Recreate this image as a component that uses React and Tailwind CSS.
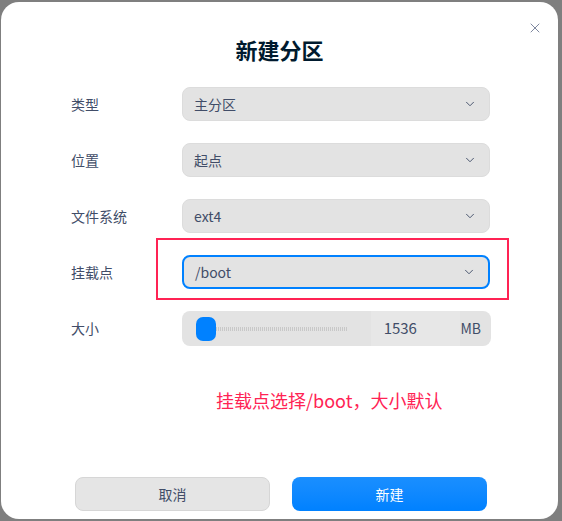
import { X, ChevronDown } from 'lucide-react';

const font = { fontFamily: '"Noto Sans CJK SC", "Noto Sans", sans-serif' };

function Select({ value, focused }) {
    return (
        <div
            className={`flex h-[34px] w-[308px] items-center justify-between rounded-[8px] bg-[#e3e3e3] pl-[11px] pr-[12px] text-[14px] text-[#414d68] ${
                focused ? 'border-2 border-[#0081ff] pl-[9px] pr-[10px]' : 'border border-[#dcdcdc]'
            }`}
        >
            <span>{value}</span>
            <ChevronDown className="h-[14px] w-[14px] text-[#414d68]" strokeWidth={1.6} />
        </div>
    );
}

function Row({ label, children }) {
    return (
        <div className="flex items-center">
            <div className="w-[111px] text-[14px] text-[#414d68]">{label}</div>
            {children}
        </div>
    );
}

export default function App() {
    return (
        <div className="h-[521px] w-[562px] bg-[#7f7f7f] pl-[1px] pt-[2px]" style={font}>
            <div className="relative flex h-[517px] w-[557px] flex-col rounded-[18px] bg-white pl-[70px]">
                <button className="absolute right-[15px] top-[18px] text-[#6b7590]">
                    <X className="h-[16px] w-[16px]" strokeWidth={1.3} />
                </button>

                <h1 className="mt-[32px] -ml-[70px] text-center text-[22px] font-bold leading-[30px] text-[#001a2e]">
                    新建分区
                </h1>

                <div className="mt-[23px] flex flex-col gap-[22px]">
                    <Row label="类型">
                        <Select value="主分区" />
                    </Row>
                    <Row label="位置">
                        <Select value="起点" />
                    </Row>
                    <Row label="文件系统">
                        <Select value="ext4" />
                    </Row>
                    <Row label="挂载点">
                        <div className="relative">
                            <Select value="/boot" focused />
                            <div className="pointer-events-none absolute -bottom-[11px] -left-[26px] -right-[19px] -top-[17px] border-2 border-[#ff2354]" />
                        </div>
                    </Row>
                    <Row label="大小">
                        <div className="flex h-[35px] w-[309px] items-center rounded-[8px] bg-[#e3e3e3] pl-[14px] pr-[10px]">
                            <div className="h-[24px] w-[20px] rounded-[7px] bg-[#0081ff]" />
                            <div className="h-[4px] w-[132px] bg-[repeating-linear-gradient(90deg,#c8c8c8_0px,#c8c8c8_1px,transparent_1px,transparent_2px)]" />
                            <div className="ml-[23px] flex h-[35px] w-[90px] items-center bg-[#e7e7e7] pl-[13px] text-[15px] text-[#414d68]">
                                1536
                            </div>
                            <span className="ml-auto text-[14px] text-[#414d68]">MB</span>
                        </div>
                    </Row>
                </div>

                <p className="mt-[41px] ml-[145px] text-[18px] text-[#ff2354]">
                    挂载点选择/boot，大小默认
                </p>

                <div className="mt-auto mb-[8px] ml-[4px] flex gap-[22px]">
                    <button className="h-[34px] w-[195px] rounded-[8px] border border-[#d6d6d6] bg-[#e5e5e5] text-[14px] text-[#414d68]">
                        取消
                    </button>
                    <button className="h-[34px] w-[195px] rounded-[8px] bg-gradient-to-b from-[#1a8fff] to-[#0081ff] text-[14px] text-white">
                        新建
                    </button>
                </div>
            </div>
        </div>
    );
}
